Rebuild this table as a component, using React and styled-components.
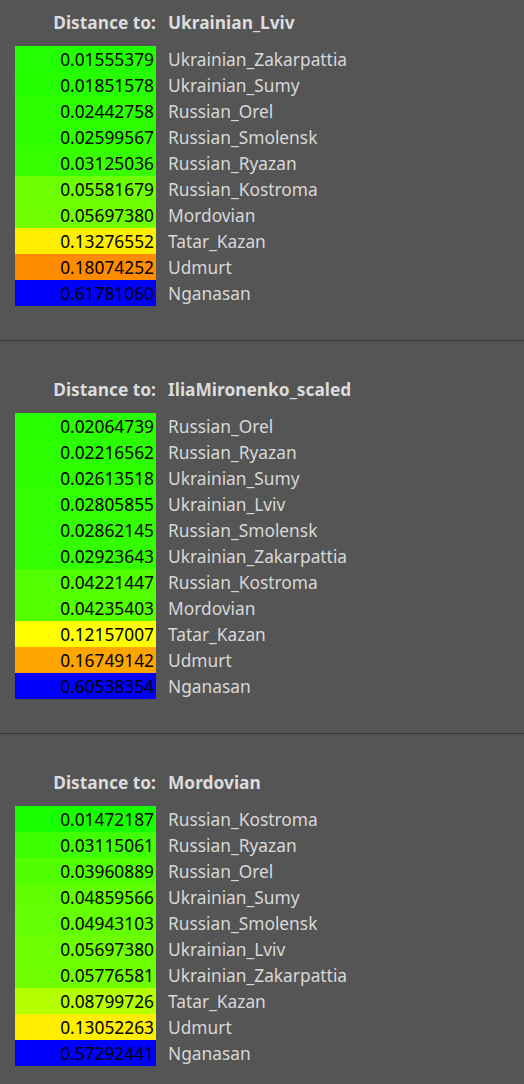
import { Fragment } from 'react';
import styled, { createGlobalStyle } from 'styled-components';

const GlobalStyle = createGlobalStyle`
  html, body {
    margin: 0;
    padding: 0;
    background: #555555;
  }
  body {
    font-family: "Noto Sans", "Open Sans", sans-serif;
  }
`;

const Page = styled.div`
  min-height: 1084px;
  background: #555555;
  padding-top: 9px;
`;

const Section = styled.section`
  padding: 0 0 34px 15px;
  & + & {
    border-top: 1px solid #363636;
    padding-top: 35px;
  }
`;

const Heading = styled.div`
  display: grid;
  grid-template-columns: 141px 1fr;
  column-gap: 12px;
  height: 26px;
  align-items: center;
  margin-bottom: 11px;
  font-size: 17.33px;
  font-weight: 700;
  color: #dcdcdc;
`;

const HeadingLabel = styled.span`
  text-align: right;
`;

const Table = styled.div`
  display: grid;
  grid-template-columns: 141px 1fr;
  column-gap: 12px;
`;

const Value = styled.div`
  height: 26px;
  line-height: 26px;
  background: ${(p) => p.$bg};
  color: #000;
  text-align: right;
  padding-right: 2px;
  font-size: 17.33px;
`;

const Name = styled.div`
  height: 26px;
  line-height: 26px;
  color: #d8d8d8;
  font-size: 17.33px;
`;

const sections = [
  {
    target: 'Ukrainian_Lviv',
    rows: [
      ['0.01555379', 'Ukrainian_Zakarpattia', '#22ff00'],
      ['0.01851578', 'Ukrainian_Sumy', '#26ff00'],
      ['0.02442758', 'Russian_Orel', '#2dff00'],
      ['0.02599567', 'Russian_Smolensk', '#30ff00'],
      ['0.03125036', 'Russian_Ryazan', '#38ff00'],
      ['0.05581679', 'Russian_Kostroma', '#6eff00'],
      ['0.05697380', 'Mordovian', '#70ff00'],
      ['0.13276552', 'Tatar_Kazan', '#ffee00'],
      ['0.18074252', 'Udmurt', '#ff8c00'],
      ['0.61781060', 'Nganasan', '#0000ff'],
    ],
  },
  {
    target: 'IliaMironenko_scaled',
    rows: [
      ['0.02064739', 'Russian_Orel', '#2aff00'],
      ['0.02216562', 'Russian_Ryazan', '#2cff00'],
      ['0.02613518', 'Ukrainian_Sumy', '#30ff00'],
      ['0.02805855', 'Ukrainian_Lviv', '#32ff00'],
      ['0.02862145', 'Russian_Smolensk', '#33ff00'],
      ['0.02923643', 'Ukrainian_Zakarpattia', '#34ff00'],
      ['0.04221447', 'Russian_Kostroma', '#54ff00'],
      ['0.04235403', 'Mordovian', '#54ff00'],
      ['0.12157007', 'Tatar_Kazan', '#ffff00'],
      ['0.16749142', 'Udmurt', '#ffa500'],
      ['0.60538354', 'Nganasan', '#0000ff'],
    ],
  },
  {
    target: 'Mordovian',
    rows: [
      ['0.01472187', 'Russian_Kostroma', '#18ff00'],
      ['0.03115061', 'Russian_Ryazan', '#40ff00'],
      ['0.03960889', 'Russian_Orel', '#52ff00'],
      ['0.04859566', 'Ukrainian_Sumy', '#62ff00'],
      ['0.04943103', 'Russian_Smolensk', '#64ff00'],
      ['0.05697380', 'Ukrainian_Lviv', '#6eff00'],
      ['0.05776581', 'Ukrainian_Zakarpattia', '#70ff00'],
      ['0.08799726', 'Tatar_Kazan', '#b4ff00'],
      ['0.13052263', 'Udmurt', '#ffee00'],
      ['0.57292441', 'Nganasan', '#0000ff'],
    ],
  },
];

export default function App() {
  return (
    <>
      <GlobalStyle />
      <Page>
        {sections.map((s) => (
          <Section key={s.target}>
            <Heading>
              <HeadingLabel>Distance to:</HeadingLabel>
              <span>{s.target}</span>
            </Heading>
            <Table>
              {s.rows.map(([value, name, color]) => (
                <Fragment key={name}>
                  <Value $bg={color}>{value}</Value>
                  <Name>{name}</Name>
                </Fragment>
              ))}
            </Table>
          </Section>
        ))}
      </Page>
    </>
  );
}
